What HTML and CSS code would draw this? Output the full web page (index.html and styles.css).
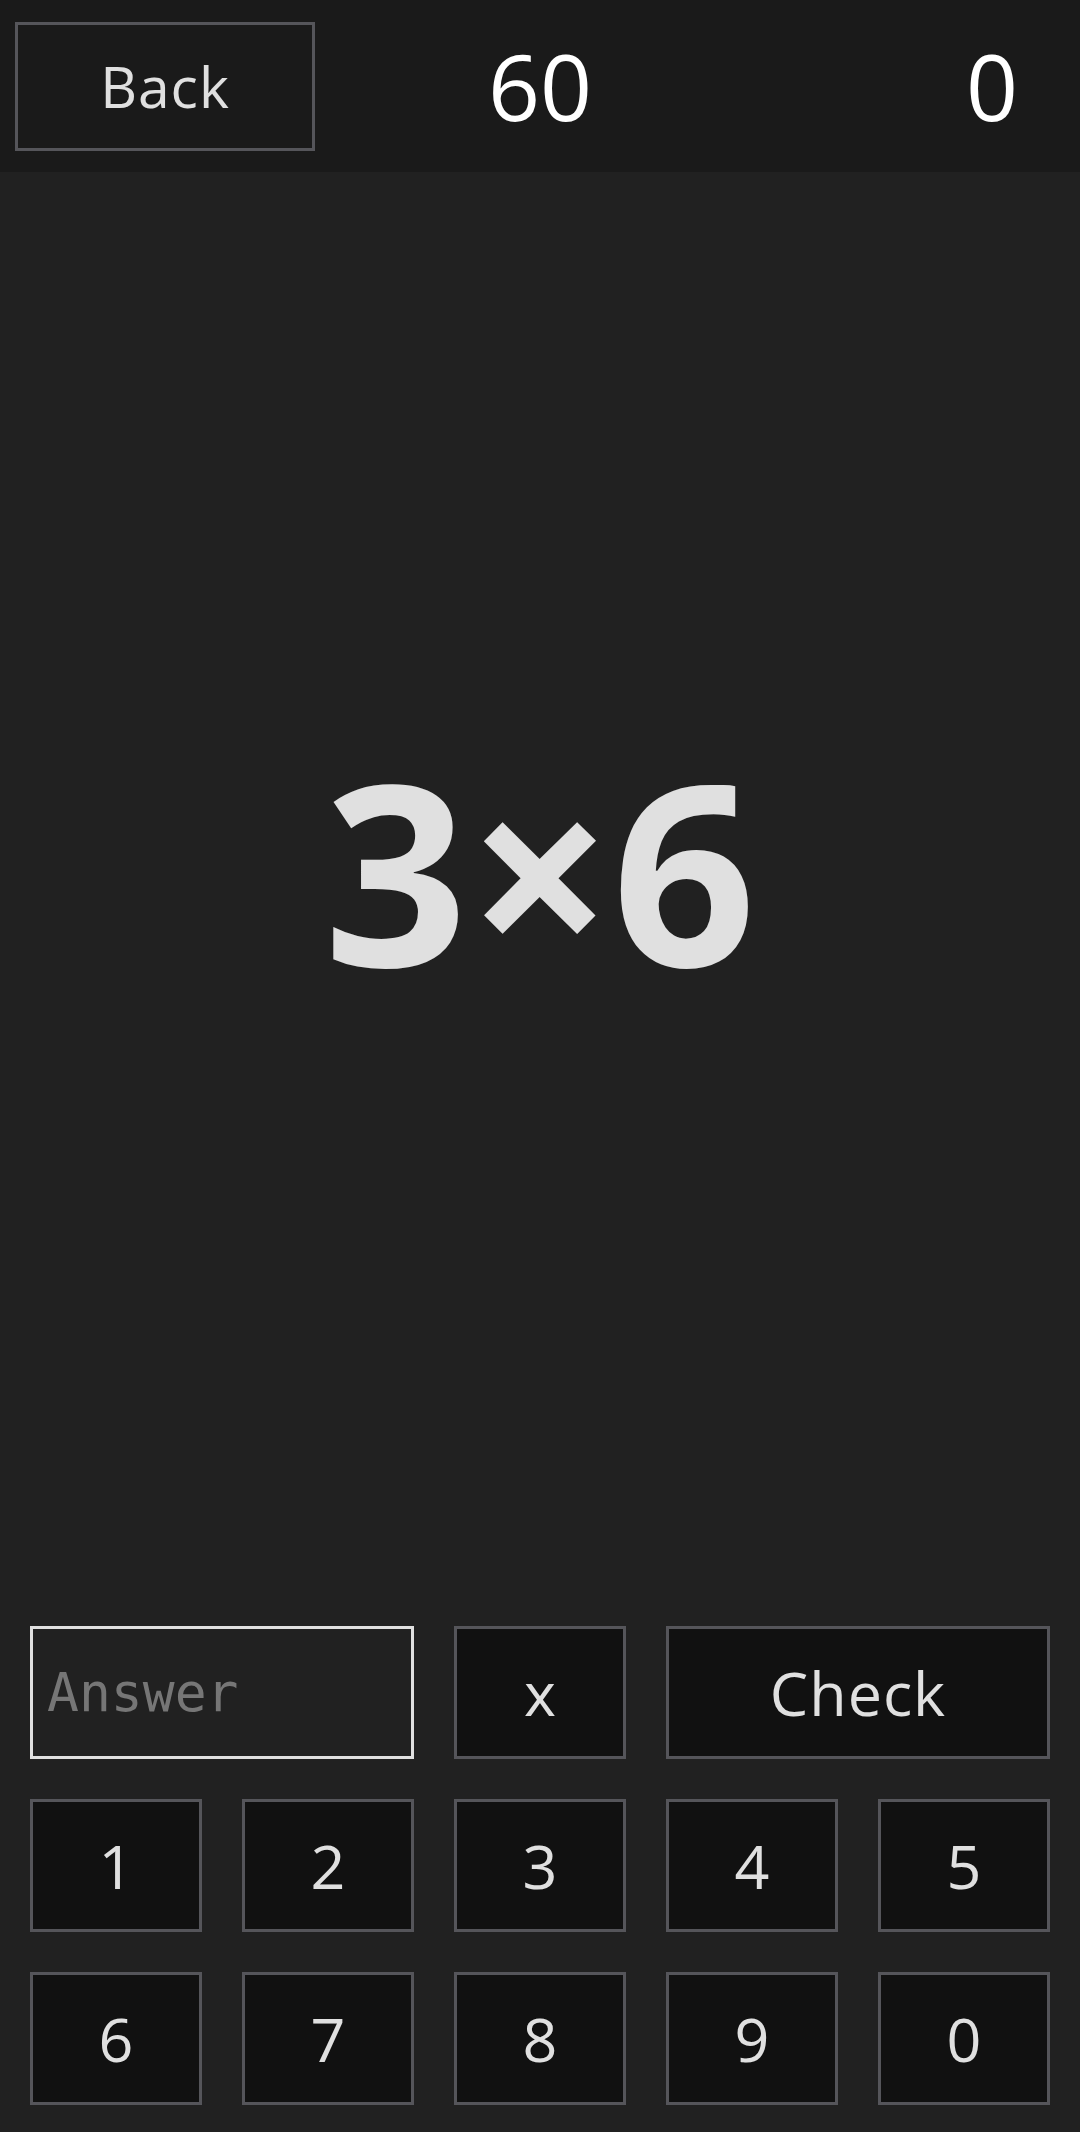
FILE: index.html
```html
<!DOCTYPE html>
<html lang="en">
<head>
<meta charset="utf-8">
<title>Multiply</title>
<link rel="stylesheet" href="styles.css">
</head>
<body>
<div class="app">
  <header class="topbar">
    <button class="back">Back</button>
    <div class="timer">60</div>
    <div class="score">0</div>
  </header>
  <main class="stage">
    <div class="question">3×6</div>
  </main>
  <section class="pad">
    <input class="answer" type="text" placeholder="Answer">
    <button class="key">x</button>
    <button class="key check">Check</button>
    <button class="key">1</button>
    <button class="key">2</button>
    <button class="key">3</button>
    <button class="key">4</button>
    <button class="key">5</button>
    <button class="key">6</button>
    <button class="key">7</button>
    <button class="key">8</button>
    <button class="key">9</button>
    <button class="key">0</button>
  </section>
</div>
</body>
</html>
```
FILE: styles.css
```css
* { box-sizing: border-box; }
html, body {
  margin: 0;
  padding: 0;
  background: #212121;
  font-family: "Open Sans", "Noto Sans", sans-serif;
}
.app {
  height: 2132px;
  display: flex;
  flex-direction: column;
}
.topbar {
  height: 172px;
  flex: 0 0 172px;
  background: #1a1a1a;
  display: grid;
  grid-template-columns: 300px 1fr 300px;
  align-items: center;
  padding: 0 15px;
}
.back {
  height: 129px;
  background: #1a1a1a;
  border: 3px solid #55555a;
  color: #e0e0e0;
  font-family: "Open Sans", sans-serif;
  font-size: 57px;
  letter-spacing: 1px;
  padding: 0;
}
.timer, .score {
  color: #ffffff;
  font-size: 91px;
  line-height: 1;
}
.timer { text-align: center; }
.score { text-align: right; padding-right: 47px; }
.stage {
  flex: 1;
  display: flex;
  align-items: center;
  justify-content: center;
  padding-top: 2px;
}
.question {
  color: #e0e0e0;
  font-weight: 700;
  font-size: 252px;
  line-height: 1;
}
.pad {
  display: grid;
  grid-template-columns: repeat(5, 1fr);
  grid-auto-rows: 133px;
  gap: 40px;
  padding: 60px 30px 27px;
}
.answer {
  grid-column: span 2;
  background: #212121;
  border: 3px solid #e0e0e0;
  color: #e0e0e0;
  font-family: "DejaVu Sans Mono", monospace;
  font-size: 53px;
  padding: 0 14px;
  outline: none;
}
.answer::placeholder { color: #767676; }
.key {
  background: #111111;
  border: 3px solid #55555a;
  color: #e0e0e0;
  font-family: "Open Sans", sans-serif;
  font-size: 61px;
  padding: 0;
}
.check { grid-column: span 2; letter-spacing: 1px; }
```
